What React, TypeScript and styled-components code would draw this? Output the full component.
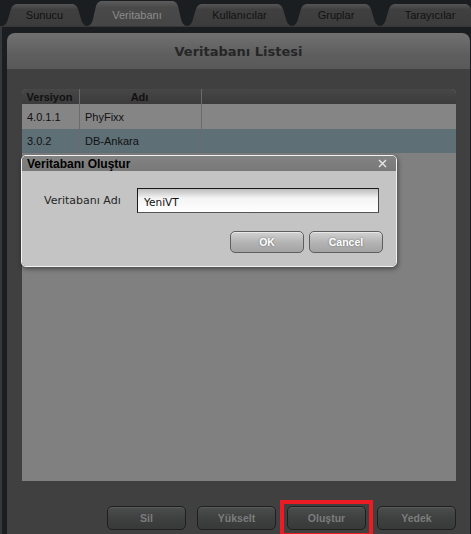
import React from "react";
import styled, { createGlobalStyle, css } from "styled-components";

const Global = createGlobalStyle`
  html, body { margin: 0; padding: 0; background: #1a1e20; }
  * { box-sizing: border-box; }
`;

const Root = styled.div`
  position: relative;
  width: 471px;
  height: 534px;
  overflow: hidden;
  background: #1a1e20;
  font-family: "Liberation Sans", Arial, sans-serif;
`;

const TabBar = styled.div`
  display: flex;
  align-items: flex-end;
  height: 27px;
  padding-left: 2px;
  border-bottom: 1px solid #34383a;
`;

const tabPath = (w: number, h: number) =>
  `path('M0 ${h} C3 ${h} 5 ${h - 3} 6 ${h - 7} L9 5 C10 2 12 0 16 0 L${w - 16} 0 C${w - 12} 0 ${w - 10} 2 ${w - 9} 5 L${w - 6} ${h - 7} C${w - 5} ${h - 3} ${w - 3} ${h} ${w} ${h} Z')`;

const Tab = styled.div<{ $w: number; $active?: boolean }>`
  flex: 0 0 ${(p) => p.$w}px;
  width: ${(p) => p.$w}px;
  height: ${(p) => (p.$active ? 25 : 22)}px;
  clip-path: ${(p) => tabPath(p.$w, p.$active ? 25 : 22)};
  display: flex;
  align-items: center;
  justify-content: center;
  padding-top: ${(p) => (p.$active ? 3 : 0)}px;
  font-size: 11px;
  color: ${(p) => (p.$active ? "#8c8c8c" : "#111")};
  background: ${(p) =>
    p.$active
      ? "linear-gradient(#5c5c5c, #4a4a4a 25%, #454545)"
      : "linear-gradient(#555, #404040 25%, #3c3c3c)"};
`;

const Frame = styled.div`
  border-left: 2px solid #34383a;
  padding: 6px 0 0 5px;
  height: 507px;
`;

const Panel = styled.div`
  width: 463px;
  height: 100%;
  display: flex;
  flex-direction: column;
`;

const PanelHeader = styled.div`
  height: 36px;
  border-radius: 8px 8px 0 0;
  background: linear-gradient(#717171, #5e5e5e 60%, #595959);
  display: flex;
  align-items: center;
  justify-content: center;
  font-family: "DejaVu Sans", Verdana, sans-serif;
  font-weight: bold;
  font-size: 13px;
  color: #262626;
`;

const PanelBody = styled.div`
  flex: 1;
  background: #404040;
  padding: 20px 14px 0 15px;
  display: flex;
  flex-direction: column;
`;

const List = styled.div`
  height: 392px;
  background: #808080;
  border-radius: 5px 5px 0 0;
  overflow: hidden;
`;

const Row = styled.div<{ $kind: "head" | "plain" | "selected" }>`
  display: grid;
  grid-template-columns: 58px 122px 1fr;
  height: ${(p) => (p.$kind === "head" ? 15 : p.$kind === "plain" ? 25 : 24)}px;
  background: ${(p) =>
    p.$kind === "head"
      ? "linear-gradient(#474747, #3b3b3b)"
      : p.$kind === "plain"
      ? "#858585"
      : "#5e6f76"};
`;

const Cell = styled.div<{ $head?: boolean; $last?: boolean }>`
  display: flex;
  align-items: center;
  font-size: 11px;
  color: #111;
  border-right: ${(p) => (p.$last ? "none" : p.$head ? "1px solid #6a6a6a" : "1px solid #6b6b6b")};
  ${(p) =>
    p.$head
      ? css`
          justify-content: center;
          font-weight: bold;
          padding-right: 2px;
        `
      : css`
          padding-left: 5px;
        `}
`;

const ButtonBar = styled.div`
  display: flex;
  justify-content: flex-end;
  gap: 11px;
  margin-top: 25px;
`;

const DarkButton = styled.button<{ $marked?: boolean }>`
  position: relative;
  width: 79px;
  height: 24px;
  border: 1px solid #1f1f1f;
  border-radius: 5px;
  background: linear-gradient(#4c4e4e, #3f4141 50%, #383a3a);
  box-shadow: inset 0 1px 0 rgba(255, 255, 255, 0.08);
  font-family: "Liberation Sans", Arial, sans-serif;
  font-weight: bold;
  font-size: 10.5px;
  color: #7c7c7c;
  padding: 0;
  ${(p) =>
    p.$marked &&
    css`
      &::after {
        content: "";
        position: absolute;
        left: -8px;
        right: -8px;
        top: -7px;
        bottom: -8px;
        border: 4px solid #ed1c24;
      }
    `}
`;

const Dialog = styled.div`
  position: absolute;
  left: 21px;
  top: 155px;
  width: 376px;
  height: 112px;
  border: 1px solid #f2f2f2;
  border-radius: 5px;
  overflow: hidden;
  box-shadow: 1px 2px 5px rgba(0, 0, 0, 0.45);
  display: flex;
  flex-direction: column;
`;

const DialogTitle = styled.div`
  height: 15px;
  background: linear-gradient(#838383, #787878);
  display: flex;
  align-items: center;
  justify-content: space-between;
  padding: 0 9px 0 5px;
  font-weight: bold;
  font-size: 12px;
  color: #000;
`;

const DialogBody = styled.div`
  flex: 1;
  background: #c4c4c4;
  padding: 17px 13px 13px 21px;
  display: flex;
  flex-direction: column;
  gap: 18px;
`;

const FieldRow = styled.div`
  display: flex;
  align-items: center;
`;

const Label = styled.label`
  flex: 0 0 94px;
  padding-left: 1px;
  font-family: "DejaVu Sans", Verdana, sans-serif;
  font-size: 11px;
  color: #262626;
`;

const Input = styled.input`
  flex: 0 0 242px;
  width: 242px;
  height: 25px;
  margin: 0;
  border: 1px solid #1a1a1a;
  border-right-color: #444;
  border-bottom-color: #555;
  background: linear-gradient(#bdbdbd, #f4f4f4 40%, #fff);
  padding: 2px 0 0 6px;
  font-family: "DejaVu Sans", Verdana, sans-serif;
  font-size: 10.5px;
  color: #111;
  outline: none;
`;

const Actions = styled.div`
  display: flex;
  justify-content: flex-end;
  gap: 5px;
`;

const LightButton = styled.button`
  width: 74px;
  height: 22px;
  border: 1px solid #5e5e5e;
  border-radius: 5px;
  background: linear-gradient(#d2d2d2, #b5b5b5 50%, #a3a3a3);
  box-shadow: inset 0 1px 0 rgba(255, 255, 255, 0.5);
  font-family: "Liberation Sans", Arial, sans-serif;
  font-weight: bold;
  font-size: 10.5px;
  color: #fff;
  text-shadow: 0 0 2px rgba(0, 0, 0, 0.45);
  padding: 0;
`;

const CloseIcon = () => (
  <svg width="9" height="9" viewBox="0 0 9 9">
    <path d="M1 1 L8 8 M8 1 L1 8" stroke="#e8e8e8" strokeWidth="1.4" fill="none" />
  </svg>
);

const tabs = [
  { label: "Sunucu", w: 85 },
  { label: "Veritabanı", w: 100, active: true },
  { label: "Kullanıcılar", w: 105 },
  { label: "Gruplar", w: 88 },
  { label: "Tarayıcılar", w: 100 },
];

const rows = [
  { v: "4.0.1.1", name: "PhyFixx", kind: "plain" as const },
  { v: "3.0.2", name: "DB-Ankara", kind: "selected" as const },
];

export default function App() {
  return (
    <Root>
      <Global />
      <TabBar>
        {tabs.map((t) => (
          <Tab key={t.label} $w={t.w} $active={t.active}>
            {t.label}
          </Tab>
        ))}
      </TabBar>
      <Frame>
        <Panel>
          <PanelHeader>Veritabanı Listesi</PanelHeader>
          <PanelBody>
            <List>
              <Row $kind="head">
                <Cell $head>Versiyon</Cell>
                <Cell $head>Adı</Cell>
                <Cell $head $last />
              </Row>
              {rows.map((r) => (
                <Row key={r.v} $kind={r.kind}>
                  <Cell>{r.v}</Cell>
                  <Cell>{r.name}</Cell>
                  <Cell $last />
                </Row>
              ))}
            </List>
            <ButtonBar>
              <DarkButton>Sil</DarkButton>
              <DarkButton>Yükselt</DarkButton>
              <DarkButton $marked>Oluştur</DarkButton>
              <DarkButton>Yedek</DarkButton>
            </ButtonBar>
          </PanelBody>
        </Panel>
      </Frame>
      <Dialog>
        <DialogTitle>
          <span>Veritabanı Oluştur</span>
          <CloseIcon />
        </DialogTitle>
        <DialogBody>
          <FieldRow>
            <Label>Veritabanı Adı</Label>
            <Input defaultValue="YeniVT" />
          </FieldRow>
          <Actions>
            <LightButton>OK</LightButton>
            <LightButton>Cancel</LightButton>
          </Actions>
        </DialogBody>
      </Dialog>
    </Root>
  );
}
